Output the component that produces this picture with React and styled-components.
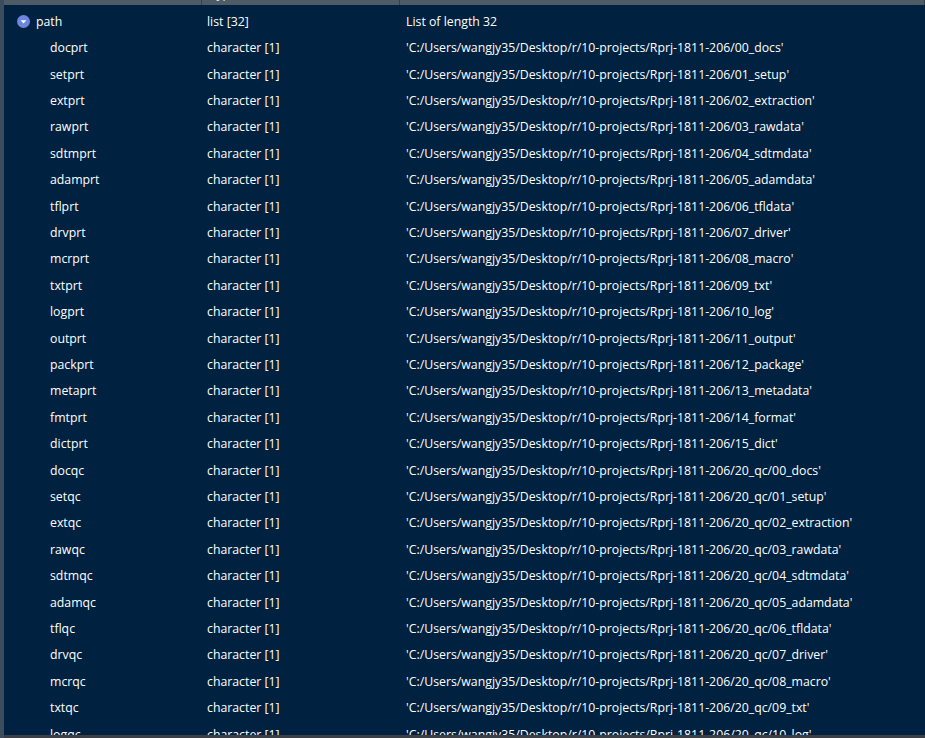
import React from "react";
import styled, { createGlobalStyle } from "styled-components";

const GlobalStyle = createGlobalStyle`
  html, body {
    margin: 0;
    padding: 0;
    background: #002240;
    overflow: hidden;
  }
`;

const base = "C:/Users/wangjy35/Desktop/r/10-projects/Rprj-1811-206/";

const children = [
  ["docprt", "00_docs"],
  ["setprt", "01_setup"],
  ["extprt", "02_extraction"],
  ["rawprt", "03_rawdata"],
  ["sdtmprt", "04_sdtmdata"],
  ["adamprt", "05_adamdata"],
  ["tflprt", "06_tfldata"],
  ["drvprt", "07_driver"],
  ["mcrprt", "08_macro"],
  ["txtprt", "09_txt"],
  ["logprt", "10_log"],
  ["outprt", "11_output"],
  ["packprt", "12_package"],
  ["metaprt", "13_metadata"],
  ["fmtprt", "14_format"],
  ["dictprt", "15_dict"],
  ["docqc", "20_qc/00_docs"],
  ["setqc", "20_qc/01_setup"],
  ["extqc", "20_qc/02_extraction"],
  ["rawqc", "20_qc/03_rawdata"],
  ["sdtmqc", "20_qc/04_sdtmdata"],
  ["adamqc", "20_qc/05_adamdata"],
  ["tflqc", "20_qc/06_tfldata"],
  ["drvqc", "20_qc/07_driver"],
  ["mcrqc", "20_qc/08_macro"],
  ["txtqc", "20_qc/09_txt"],
  ["logqc", "20_qc/10_log"],
];

export default function App() {
  return (
    <>
      <GlobalStyle />
      <Viewer>
        <SideStrip />
        <Main>
          <Header>
            <HeaderCell width={198} />
            <HeaderCell width={198}>Type</HeaderCell>
            <HeaderCell grow>Value</HeaderCell>
          </Header>
          <Body>
            <Row>
              <NameCell>
                <ExpandIcon />
                path
              </NameCell>
              <TypeCell>list [32]</TypeCell>
              <ValueCell>List of length 32</ValueCell>
            </Row>
            {children.map(([name, dir]) => (
              <Row key={name}>
                <NameCell child>{name}</NameCell>
                <TypeCell>character [1]</TypeCell>
                <ValueCell>'{base + dir}'</ValueCell>
              </Row>
            ))}
          </Body>
          <ScrollBar />
        </Main>
      </Viewer>
    </>
  );
}

function ExpandIcon() {
  return (
    <IconWrap>
      <svg width="13" height="13" viewBox="0 0 13 13">
        <circle cx="6.5" cy="6.5" r="6.5" fill="#6c86de" />
        <path d="M3.6 5.2 L9.4 5.2 L6.5 8.6 Z" fill="#ffffff" />
      </svg>
    </IconWrap>
  );
}

const Viewer = styled.div`
  display: flex;
  width: 925px;
  height: 738px;
  overflow: hidden;
  background: #002240;
  font-family: "Open Sans", "Noto Sans", sans-serif;
  font-size: 12.3px;
  color: #ffffff;
`;

const SideStrip = styled.div`
  width: 4px;
  flex: none;
  background: #3a4c5e;
`;

const Main = styled.div`
  flex: 1;
  display: flex;
  flex-direction: column;
  min-width: 0;
`;

const Header = styled.div`
  height: 5px;
  flex: none;
  display: flex;
  background: #4f5b67;
  overflow: hidden;
`;

const HeaderCell = styled.div`
  width: ${(p) => (p.grow ? "auto" : `${p.width}px`)};
  flex: ${(p) => (p.grow ? 1 : "none")};
  box-sizing: border-box;
  border-right: 1px solid #37414b;
  padding-left: 8px;
  line-height: 5px;
  font-size: 12px;
  color: #e8ecef;
  margin-top: -9px;
`;

const Body = styled.div`
  flex: 1;
  padding-top: 3px;
  overflow: hidden;
`;

const Row = styled.div`
  display: flex;
  align-items: center;
  height: 26.42px;
  white-space: nowrap;
`;

const NameCell = styled.div`
  width: 198px;
  flex: none;
  display: flex;
  align-items: center;
  box-sizing: border-box;
  padding-left: ${(p) => (p.child ? "46px" : "13px")};
`;

const IconWrap = styled.span`
  display: inline-flex;
  width: 13px;
  height: 13px;
  margin-right: 6px;
`;

const TypeCell = styled.div`
  width: 199px;
  flex: none;
  box-sizing: border-box;
  padding-left: 5px;
`;

const ValueCell = styled.div`
  flex: 1;
  padding-left: 5px;
`;

const ScrollBar = styled.div`
  height: 3px;
  flex: none;
  background: #3c4046;
`;
